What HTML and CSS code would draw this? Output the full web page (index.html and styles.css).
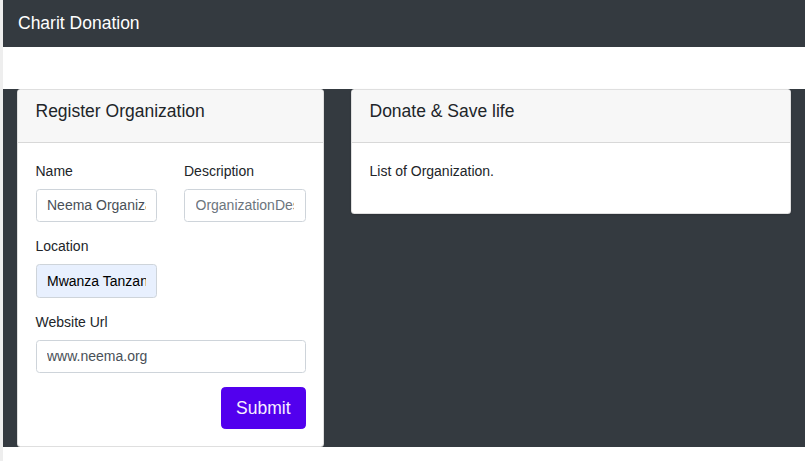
FILE: index.html
```html
<!DOCTYPE html>
<html lang="en">
<head>
<meta charset="utf-8">
<title>Charit Donation</title>
<link rel="stylesheet" href="styles.css">
</head>
<body>
<div class="page">
  <nav class="navbar">
    <a class="brand" href="#">Charit Donation</a>
  </nav>
  <main class="main">
    <section class="card card-form">
      <div class="card-header"><h5 class="card-title">Register Organization</h5></div>
      <div class="card-body">
        <form class="form">
          <div class="form-grid">
            <div class="form-group">
              <label class="label">Name</label>
              <input class="input" type="text" value="Neema Organization">
            </div>
            <div class="form-group">
              <label class="label">Description</label>
              <input class="input" type="text" placeholder="OrganizationDescription">
            </div>
            <div class="form-group">
              <label class="label">Location</label>
              <input class="input input-filled" type="text" value="Mwanza Tanzania">
            </div>
          </div>
          <div class="form-group">
            <label class="label">Website Url</label>
            <input class="input" type="text" value="www.neema.org">
          </div>
          <div class="actions">
            <button class="btn" type="button">Submit</button>
          </div>
        </form>
      </div>
    </section>
    <section class="card card-list">
      <div class="card-header"><h5 class="card-title">Donate &amp; Save life</h5></div>
      <div class="card-body">
        <p class="text">List of Organization.</p>
      </div>
    </section>
  </main>
</div>
</body>
</html>
```
FILE: styles.css
```css
* { box-sizing: border-box; }
html, body { margin: 0; padding: 0; }
body {
  background: #ffffff;
  font-family: "Liberation Sans", Arial, sans-serif;
  font-size: 14px;
  line-height: 1.5;
  color: #212529;
  min-height: 461px;
  border-left: 3px solid #eeeeee;
}
.page {
  margin-right: 1px;
}
.navbar {
  background: #343a40;
  height: 47px;
  padding: 0 14px;
  display: flex;
  align-items: center;
}
.brand {
  color: #ffffff;
  text-decoration: none;
  font-size: 17.5px;
  line-height: 26px;
  padding-left: 1px;
  margin-top: -2px;
}
.main {
  margin-top: 42px;
  background: #343a40;
  padding: 0 14px;
  display: flex;
  align-items: flex-start;
  gap: 27px;
}
.card {
  background: #ffffff;
  border: 1px solid rgba(0,0,0,.125);
  border-radius: 3.5px;
  overflow: hidden;
}
.card-form { width: 307px; flex: none; }
.card-list { flex: 1; box-shadow: 0 1px 2px rgba(0,0,0,.15); }
.card-header {
  background: #f7f7f7;
  border-bottom: 1px solid rgba(0,0,0,.125);
  padding: 10.5px 17.5px;
}
.card-title {
  margin: 0 0 10px;
  font-size: 17.5px;
  font-weight: 400;
  line-height: 21px;
}
.card-body {
  padding: 17.5px 17.5px 17px;
}
.form-grid {
  display: grid;
  grid-template-columns: 1fr 1fr;
  column-gap: 27px;
}
.form-group {
  margin-bottom: 14px;
  display: flex;
  flex-direction: column;
}
.label {
  margin-bottom: 7px;
  line-height: 21px;
}
.input {
  display: block;
  width: 100%;
  height: 33.5px;
  padding: 5.25px 10.5px;
  font-family: inherit;
  font-size: 14px;
  line-height: 21px;
  color: #495057;
  background: #ffffff;
  border: 1px solid #ced4da;
  border-radius: 3.5px;
  outline: none;
}
.input::placeholder { color: #6c757d; opacity: 1; }
.input-filled {
  background: #e8f0fe;
  color: #000000;
}
.actions {
  display: flex;
  justify-content: flex-end;
}
.btn {
  font-family: inherit;
  font-size: 17.5px;
  line-height: 26.25px;
  padding: 7px 14px;
  background: #5200ee;
  color: #f8efff;
  border: 1px solid #5200ee;
  border-radius: 4.2px;
  cursor: pointer;
}
.text {
  margin: 0 0 14px;
  line-height: 21px;
}
```
